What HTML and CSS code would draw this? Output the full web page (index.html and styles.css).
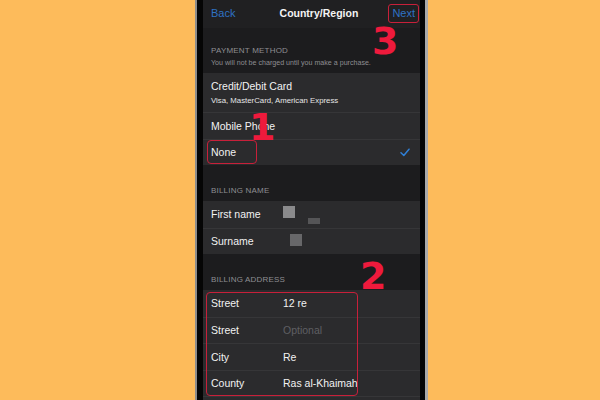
FILE: index.html
```html
<!DOCTYPE html>
<html lang="en">
<head>
    <meta charset="UTF-8">
    <meta name="viewport" content="width=device-width, initial-scale=1.0">
    <title>Country/Region</title>
    <link rel="stylesheet" href="styles.css">
</head>
<body>
    <div class="phone">
        <div class="screen">
            <!-- nav bar -->
            <div class="nav">
                <span class="nav-link">Back</span>
                <span class="nav-title">Country/Region</span>
                <span class="nav-link next">Next</span>
            </div>

            <!-- payment method -->
            <div class="section-head first">
                <div class="head-title">PAYMENT METHOD</div>
                <div class="head-sub">You will not be charged until you make a purchase.</div>
            </div>
            <div class="group">
                <div class="row tall">
                    <div class="row-title">Credit/Debit Card</div>
                    <div class="row-sub">Visa, MasterCard, American Express</div>
                </div>
                <div class="row"><span class="label">Mobile Phone</span></div>
                <div class="row">
                    <span class="label boxed">None</span>
                    <svg class="check" width="10" height="9" viewBox="0 0 10 9"><path d="M1 4.8 L3.8 7.5 L9 1.2" fill="none" stroke="#2f7fd6" stroke-width="1.5" stroke-linecap="round" stroke-linejoin="round"/></svg>
                </div>
            </div>

            <!-- billing name -->
            <div class="section-head">
                <div class="head-title">BILLING NAME</div>
            </div>
            <div class="group">
                <div class="row">
                    <span class="label">First name</span>
                    <span class="blur">
                        <i class="px px-a"></i><i class="px px-b"></i>
                    </span>
                </div>
                <div class="row">
                    <span class="label">Surname</span>
                    <span class="blur"><i class="px px-c"></i></span>
                </div>
            </div>

            <!-- billing address -->
            <div class="section-head">
                <div class="head-title">BILLING ADDRESS</div>
            </div>
            <div class="group">
                <div class="address-box"></div>
                <div class="row"><span class="label">Street</span><span class="value">12 re</span></div>
                <div class="row"><span class="label">Street</span><span class="value muted">Optional</span></div>
                <div class="row"><span class="label">City</span><span class="value">Re</span></div>
                <div class="row"><span class="label">County</span><span class="value">Ras al-Khaimah</span></div>
                <div class="row"></div>
            </div>

            <!-- step numbers -->
            <span class="step step-1">1</span>
            <span class="step step-2">2</span>
            <span class="step step-3">3</span>
        </div>
    </div>
</body>
</html>
```

FILE: styles.css
```css
html, body { margin: 0; height: 400px; overflow: hidden; }
body { background: #fdbb5b; font-family: "Liberation Sans", Arial, sans-serif; }

.phone { margin-left: 195px; width: 233px; height: 400px; box-sizing: border-box; background: #050505; border-left: 2px solid #8c8c8c; border-right: 3px solid #a9a9a9; padding: 0 5px 0 6px; }
.screen { position: relative; height: 400px; background: #1c1c1e; color: #f2f2f2; overflow: hidden; }

.nav { height: 28px; display: flex; align-items: center; justify-content: space-between; padding: 0 1px 2px 8px; box-sizing: border-box; background: #202022; }
.nav-link { color: #2f72c4; font-size: 11px; }
.nav-title { font-size: 10.5px; font-weight: bold; color: #f4f4f4; margin-left: 14px; }
.next { border: 1.5px solid #c8203a; border-radius: 3px; padding: 2px 3px 3px 3px; }

.section-head { height: 36px; padding: 0 8px 6px; box-sizing: border-box; display: flex; flex-direction: column; justify-content: flex-end; }
.section-head.first { height: 45px; padding-bottom: 6px; }
.head-title { font-size: 8px; color: #8e8e92; letter-spacing: 0.2px; }
.head-sub { font-size: 7.1px; color: #8e8e92; margin-top: 4px; }

.group { position: relative; background: #2b2b2d; }
.row { height: 26.5px; display: flex; align-items: center; padding: 0 8px; border-top: 1px solid #363638; box-sizing: border-box; font-size: 10.5px; }
.row:first-child, .address-box + .row { border-top: none; }
.row.tall { height: 39px; flex-direction: column; align-items: flex-start; justify-content: center; }
.row-title { font-size: 10.5px; }
.row-sub { font-size: 7.8px; margin-top: 4px; color: #e6e6e6; }
.label { width: 72px; flex: none; }
.value { color: #f2f2f2; }
.muted { color: #5f5f63; }
.check { margin-left: auto; margin-right: 2px; }

.boxed { width: auto; outline: 1.5px solid #c8203a; outline-offset: 0; border-radius: 3px; padding: 5px 20px 5px 3px; margin-left: -3px; }

.blur { position: relative; width: 40px; height: 20px; }
.px { position: absolute; display: block; }
.px-a { left: 0; top: 2px; width: 12px; height: 12px; background: #8a8a8c; }
.px-b { left: 25px; top: 14px; width: 12px; height: 6px; background: #555557; }
.px-c { left: 7px; top: 3px; width: 12px; height: 12px; background: #676769; }

.address-box { position: absolute; left: 3px; top: 2px; width: 152px; height: 104px; border: 1.5px solid #c8203a; border-radius: 4px; box-sizing: border-box; pointer-events: none; }

.step { position: absolute; color: #ee1a3c; font-family: "DejaVu Sans", sans-serif; font-weight: bold; font-size: 38px; line-height: 1; }
.step-1 { left: 46px; top: 108px; }
.step-2 { left: 157px; top: 257px; }
.step-3 { left: 169px; top: 22px; }
```
